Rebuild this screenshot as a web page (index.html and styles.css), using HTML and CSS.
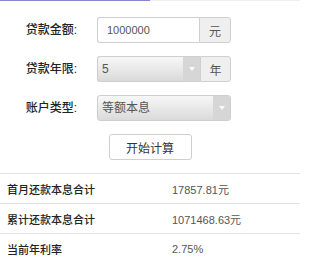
FILE: index.html
```html
<!DOCTYPE html>
<html lang="zh">
<head>
<meta charset="utf-8">
<link rel="stylesheet" href="styles.css">
</head>
<body>
<div class="progress"><div class="progress-fill"></div></div>
<form class="form">
  <div class="row">
    <label class="label">贷款金额:</label>
    <div class="group">
      <div class="input">1000000</div>
      <div class="addon">元</div>
    </div>
  </div>
  <div class="row">
    <label class="label">贷款年限:</label>
    <div class="group">
      <div class="select"><span class="select-text">5</span><span class="arrow"></span></div>
      <div class="addon">年</div>
    </div>
  </div>
  <div class="row">
    <label class="label">账户类型:</label>
    <div class="group">
      <div class="select select-full"><span class="select-text">等额本息</span><span class="arrow"></span></div>
    </div>
  </div>
  <div class="actions">
    <button type="button" class="btn">开始计算</button>
  </div>
</form>
<div class="results">
  <div class="result"><span class="r-label">首月还款本息合计</span><span class="r-value">17857.81元</span></div>
  <div class="result"><span class="r-label">累计还款本息合计</span><span class="r-value">1071468.63元</span></div>
  <div class="result"><span class="r-label">当前年利率</span><span class="r-value">2.75%</span></div>
</div>
</body>
</html>
```
FILE: styles.css
```css
* { box-sizing: border-box; }
html, body { margin: 0; padding: 0; background: #fff; }
body {
  font-family: "Liberation Sans", "Noto Sans CJK SC", sans-serif;
  color: #333;
  width: 300px;
}
.progress { height: 1px; background: #eeeeee; }
.progress-fill { width: 50%; height: 1px; background: #8a86cc; }
.form {
  padding-top: 16px;
  display: flex;
  flex-direction: column;
  gap: 13px;
  margin: 0;
}
.row {
  display: flex;
  align-items: center;
  height: 26px;
}
.label {
  width: 77px;
  text-align: right;
  font-size: 12px;
  color: #222;
  font-weight: 500;
  margin-right: 20px;
  position: relative;
  top: -2px;
}
.group {
  display: flex;
  width: 134px;
  height: 26px;
}
.input {
  width: 102px;
  height: 26px;
  border: 1px solid #cfcfcf;
  border-right: none;
  border-radius: 3px 0 0 3px;
  background: #fff;
  font-size: 11px;
  color: #555;
  padding-left: 9px;
  line-height: 24px;
}
.addon {
  flex: 1;
  height: 26px;
  border: 1px solid #cfcfcf;
  border-radius: 0 3px 3px 0;
  background: #efefef;
  font-size: 12px;
  color: #555;
  display: flex;
  align-items: center;
  justify-content: center;
}
.select {
  width: 103px;
  height: 26px;
  display: flex;
  border: 1px solid #cfcfcf;
  border-right: none;
  border-radius: 3px 0 0 3px;
  background: linear-gradient(to bottom, #f7f7f7, #dadada);
  overflow: hidden;
}
.select-full {
  width: 134px;
  border-right: 1px solid #cfcfcf;
  border-radius: 3px;
}
.select-text {
  flex: 1;
  font-size: 12px;
  color: #555;
  padding-left: 4px;
  line-height: 24px;
}
.arrow {
  width: 17px;
  background: #d6d6d6;
  display: flex;
  align-items: center;
  justify-content: center;
}
.arrow::after {
  content: "";
  border-left: 3px solid transparent;
  border-right: 3px solid transparent;
  border-top: 4px solid #fafafa;
}
.actions {
  display: flex;
  justify-content: center;
}
.btn {
  width: 83px;
  height: 26px;
  border: 1px solid #cfcfcf;
  border-radius: 3px;
  background: #fff;
  font-family: "Liberation Sans", "Noto Sans CJK SC", sans-serif;
  font-size: 12px;
  color: #333;
  padding: 0;
}
.results { margin-top: 13px; }
.result {
  display: flex;
  align-items: center;
  height: 30px;
  border-top: 1px solid #e3e3e3;
  font-size: 11px;
}
.r-label {
  width: 172px;
  padding-left: 7px;
  color: #222;
  font-weight: 500;
}
.r-value { color: #555; }
```
